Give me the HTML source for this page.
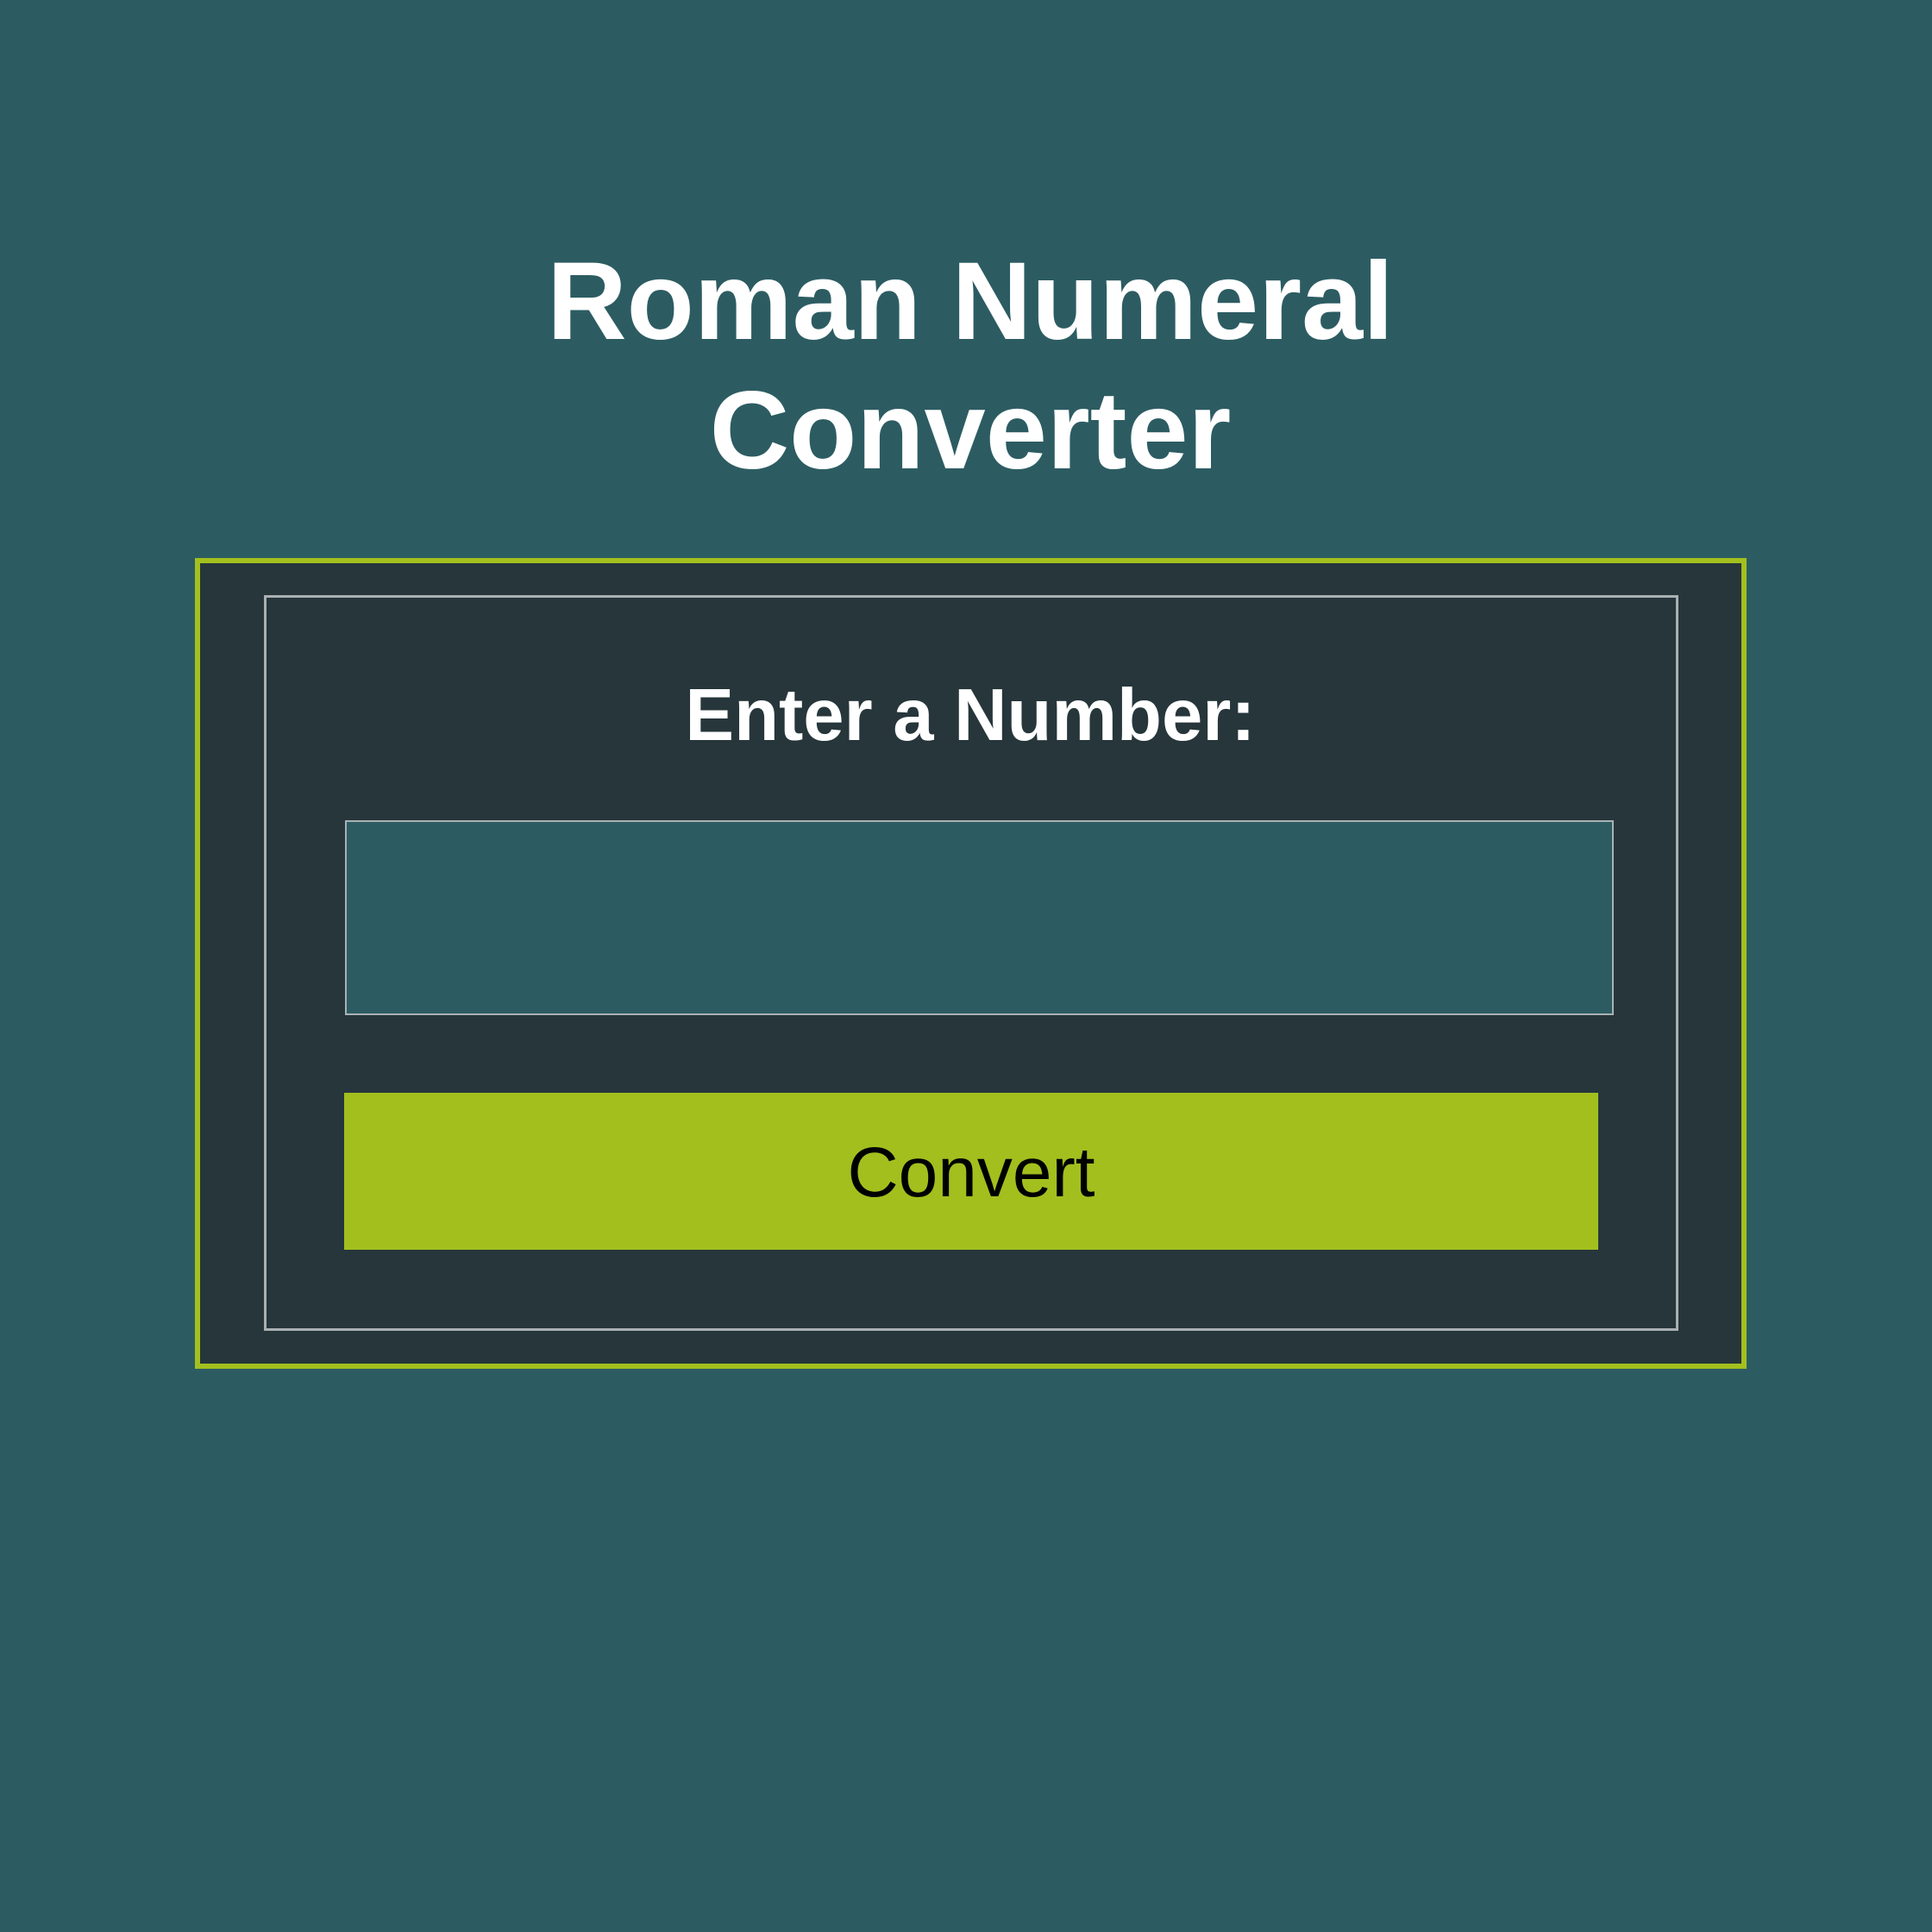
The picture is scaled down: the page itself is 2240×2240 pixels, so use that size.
<!DOCTYPE html>
<html><head><style>
html,body{margin:0;padding:0}
body{width:2240px;height:2240px;background:#2c5c62;position:relative;overflow:hidden;font-family:"Liberation Sans",Arial,sans-serif}
.t{position:absolute;left:0;width:2250px;text-align:center;color:#fff;font-weight:bold;font-size:128px;line-height:150px;white-space:nowrap}
.outer{position:absolute;left:226px;top:647px;width:1787px;height:928px;border:6px solid #a3c01e;background:#26363b}
.inner{position:absolute;left:306px;top:690px;width:1634px;height:847px;border:3px solid #aab0b2;background:#26363b}
.lbl{position:absolute;left:0;width:2250px;text-align:center;color:#fff;font-weight:bold;font-size:85px;top:780px;line-height:100px}
.inp{position:absolute;left:400px;top:951px;width:1467px;height:222px;border:2px solid #a9b1b4;background:#2c5c62}
.btn{position:absolute;left:399px;top:1267px;width:1454px;height:182px;background:#a2bf1e;color:#000;font-size:82px;text-align:center;line-height:182px}
</style></head><body>
<div class="t" style="top:275px">Roman Numeral</div>
<div class="t" style="top:425px">Converter</div>
<div class="outer"></div>
<div class="inner"></div>
<div class="lbl">Enter a Number:</div>
<div class="inp"></div>
<div class="btn"><span style="position:relative;top:2px">Convert</span></div>
</body></html>
